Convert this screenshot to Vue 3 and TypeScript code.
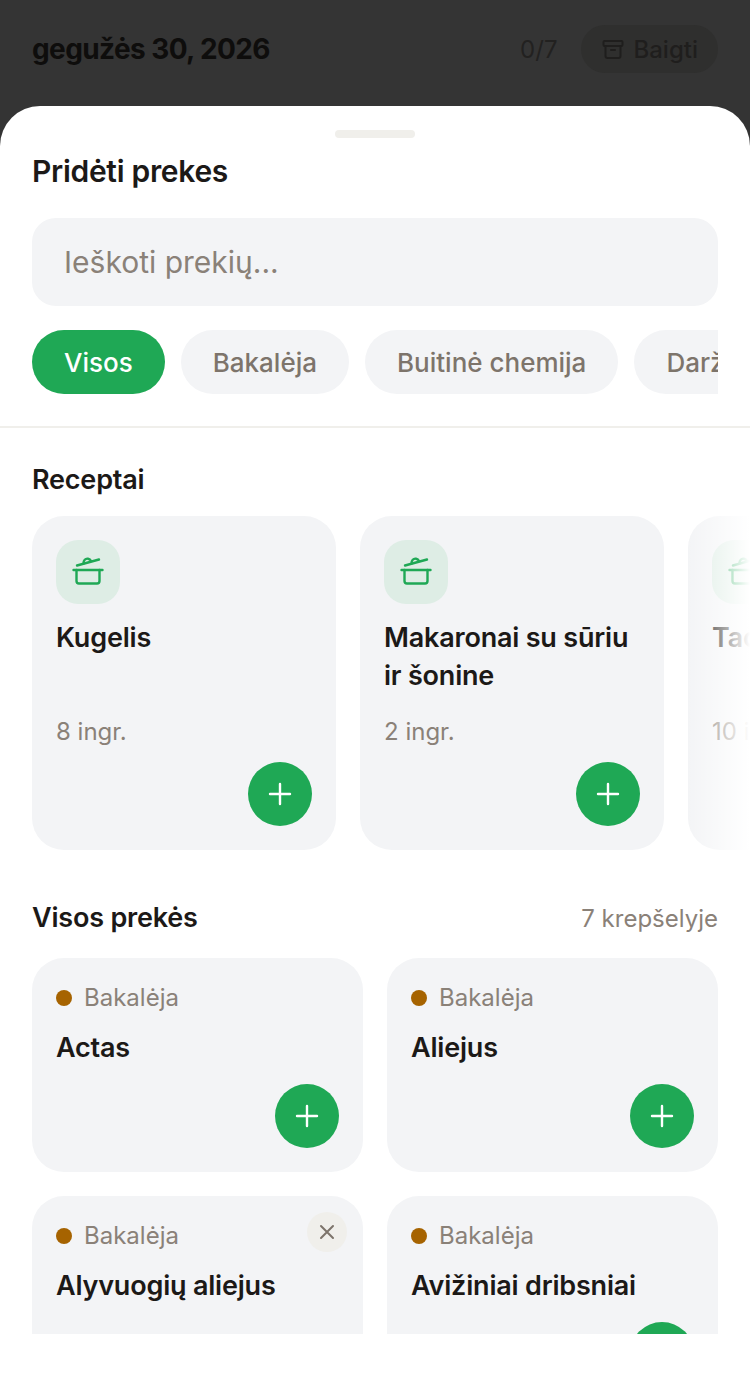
<script setup lang="ts">
interface Recipe { name: string; count: string }
interface Item { name: string; action: 'add' | 'qty' }
const chips: string[] = ['Visos', 'Bakalėja', 'Buitinė chemija', 'Daržovės']
const recipes: Recipe[] = [
  { name: 'Kugelis', count: '8 ingr.' },
  { name: 'Makaronai su sūriu ir šonine', count: '2 ingr.' },
  { name: 'Tacos', count: '10 ingr.' },
]
const items: Item[] = [
  { name: 'Actas', action: 'add' },
  { name: 'Aliejus', action: 'add' },
  { name: 'Alyvuogių aliejus', action: 'qty' },
  { name: 'Avižiniai dribsniai', action: 'add' },
]
</script>

<template>
  <div class="page">
    <header class="top">
      <div class="date">gegužės 30, 2026</div>
      <div class="top-right">
        <span class="progress">0/7</span>
        <span class="finish">
          <svg width="24" height="24" viewBox="0 0 24 24" fill="none" stroke="currentColor" stroke-width="2" stroke-linecap="round" stroke-linejoin="round">
            <rect x="2.5" y="4" width="19" height="5" rx="1" />
            <path d="M4.5 9v10a2 2 0 0 0 2 2h11a2 2 0 0 0 2-2V9" />
            <path d="M10 13h4" />
          </svg>
          Baigti
        </span>
      </div>
    </header>

    <section class="sheet">
      <div class="handle"></div>
      <div class="head">
        <h1 class="title">Pridėti prekes</h1>
        <div class="search">Ieškoti prekių...</div>
        <div class="chips">
          <span v-for="(c, i) in chips" :key="c" class="chip" :class="{ active: i === 0 }">{{ c }}</span>
        </div>
      </div>

      <div class="scroll">
        <h2 class="section-title recipes-title">Receptai</h2>
        <div class="recipes-wrap">
          <div class="recipes">
            <article v-for="r in recipes" :key="r.name" class="recipe">
              <div class="pot">
                <svg width="32" height="32" viewBox="0 0 32 32" fill="none" stroke="currentColor" stroke-width="2.4" stroke-linecap="round" stroke-linejoin="round">
                  <path d="M3 14h29" transform="translate(-1.5 0)" />
                  <path d="M4.5 14v11a2.5 2.5 0 0 0 2.5 2.5h18a2.5 2.5 0 0 0 2.5-2.5V14" />
                  <path d="M5 9.5 27 3.5" />
                  <path d="M11.5 7.5c-.2-3 2-5.300 4.500-4.800 1.400.3 2.500 1.200 3 2.300" />
                </svg>
              </div>
              <div class="recipe-name">{{ r.name }}</div>
              <div class="recipe-count">{{ r.count }}</div>
              <div class="recipe-foot">
                <button class="add" aria-label="Pridėti">
                  <svg width="28" height="28" viewBox="0 0 28 28" fill="none" stroke="#fff" stroke-width="2.4" stroke-linecap="round"><path d="M14 4v20M4 14h20" /></svg>
                </button>
              </div>
            </article>
          </div>
          <div class="fade"></div>
        </div>

        <div class="list-head">
          <h2 class="section-title">Visos prekės</h2>
          <span class="in-cart">7 krepšelyje</span>
        </div>

        <div class="grid">
          <article v-for="it in items" :key="it.name" class="item">
            <button v-if="it.action === 'qty'" class="close" aria-label="Pašalinti">
              <svg width="20" height="20" viewBox="0 0 20 20" fill="none" stroke="currentColor" stroke-width="2" stroke-linecap="round"><path d="M4 4l12 12M16 4L4 16" /></svg>
            </button>
            <div class="cat"><span class="dot"></span>Bakalėja</div>
            <div class="item-name">{{ it.name }}</div>
            <div class="item-foot">
              <div v-if="it.action === 'qty'" class="qty">
                <span class="qty-round"></span>
                <span class="qty-pill"></span>
                <span class="qty-round"></span>
              </div>
              <button v-else class="add" aria-label="Pridėti">
                <svg width="28" height="28" viewBox="0 0 28 28" fill="none" stroke="#fff" stroke-width="2.4" stroke-linecap="round"><path d="M14 4v20M4 14h20" /></svg>
              </button>
            </div>
          </article>
        </div>
      </div>
    </section>
  </div>
</template>

<style>
html, body { margin: 0; background: #fff; }
</style>

<style scoped>
.page {
  width: 750px;
  height: 1390px;
  display: flex;
  flex-direction: column;
  background: #343434;
  overflow: hidden;
  font-family: Inter, "Liberation Sans", sans-serif;
  color: #1c1917;
}
.top {
  height: 106px;
  box-sizing: border-box;
  padding: 0 32px 8px;
  display: flex;
  align-items: center;
  justify-content: space-between;
  flex: none;
}
.date { font-size: 28px; font-weight: 700; color: #0e0d0c; letter-spacing: -0.6px; }
.top-right { display: flex; align-items: center; gap: 24px; }
.progress { font-size: 24px; color: #222120; }
.finish {
  height: 48px;
  box-sizing: border-box;
  padding: 0 20px;
  border-radius: 24px;
  background: #2f2f2e;
  display: flex;
  align-items: center;
  gap: 8px;
  font-size: 24px;
  font-weight: 500;
  color: #1f1e1d;
}
.sheet {
  flex: 1;
  min-height: 0;
  background: #fff;
  border-radius: 40px 40px 0 0;
  display: flex;
  flex-direction: column;
  padding-bottom: 56px;
}
.handle {
  width: 80px;
  height: 8px;
  border-radius: 4px;
  background: #f0efeb;
  margin: 24px auto 0;
  flex: none;
}
.head {
  padding: 14px 32px 32px;
  border-bottom: 2px solid #f0efeb;
  flex: none;
}
.title { margin: 0; font-size: 30px; font-weight: 600; line-height: 38px; letter-spacing: -0.3px; }
.search {
  margin-top: 28px;
  height: 88px;
  box-sizing: border-box;
  padding: 0 32px;
  border-radius: 24px;
  background: #f3f4f6;
  display: flex;
  align-items: center;
  font-size: 30px;
  color: #8a8178;
}
.chips { margin-top: 24px; display: flex; gap: 16px; overflow: hidden; }
.chip {
  flex: none;
  height: 64px;
  box-sizing: border-box;
  padding: 0 32px;
  border-radius: 32px;
  background: #f3f4f6;
  color: #7d746b;
  display: flex;
  align-items: center;
  font-size: 26px;
  font-weight: 500;
}
.chip.active { background: #1fa855; color: #fff; }
.scroll { flex: 1; min-height: 0; overflow: hidden; }
.section-title { margin: 0; font-size: 27px; font-weight: 600; line-height: 36px; letter-spacing: -0.2px; }
.recipes-title { margin: 34px 32px 18px; }
.recipes-wrap { position: relative; }
.recipes { display: flex; gap: 24px; padding-left: 32px; overflow: hidden; }
.recipe {
  flex: none;
  width: 304px;
  height: 334px;
  box-sizing: border-box;
  padding: 24px;
  border-radius: 32px;
  background: #f3f4f6;
  display: flex;
  flex-direction: column;
}
.pot {
  width: 64px;
  height: 64px;
  border-radius: 22px;
  background: #deede5;
  color: #1fa855;
  display: flex;
  align-items: center;
  justify-content: center;
}
.recipe-name { margin-top: 15px; height: 76px; font-size: 27px; font-weight: 600; line-height: 38px; letter-spacing: -0.2px; }
.recipe-count { margin-top: 21px; font-size: 24px; line-height: 32px; color: #8a8178; }
.recipe-foot { margin-top: auto; display: flex; justify-content: flex-end; }
.fade {
  position: absolute;
  top: 0;
  right: 0;
  bottom: 0;
  width: 64px;
  background: linear-gradient(to right, rgba(255,255,255,0), #fff);
  pointer-events: none;
}
.add {
  width: 64px;
  height: 64px;
  padding: 0;
  border: 0;
  border-radius: 50%;
  background: #1fa855;
  display: flex;
  align-items: center;
  justify-content: center;
}
.list-head {
  margin: 50px 32px 22px;
  display: flex;
  align-items: center;
  justify-content: space-between;
}
.in-cart { font-size: 24px; color: #8a8178; }
.grid { padding: 0 32px; display: grid; grid-template-columns: 1fr 1fr; gap: 24px; }
.item {
  position: relative;
  height: 214px;
  box-sizing: border-box;
  padding: 24px;
  border-radius: 32px;
  background: #f3f4f6;
  display: flex;
  flex-direction: column;
}
.close {
  position: absolute;
  top: 16px;
  right: 16px;
  width: 40px;
  height: 40px;
  padding: 0;
  border: 0;
  border-radius: 50%;
  background: #f0efeb;
  color: #7d746b;
  display: flex;
  align-items: center;
  justify-content: center;
}
.cat { display: flex; align-items: center; gap: 12px; font-size: 24px; line-height: 32px; color: #8a8178; }
.dot { width: 16px; height: 16px; border-radius: 50%; background: #a66300; }
.item-name { margin-top: 16px; font-size: 27px; font-weight: 600; line-height: 36px; letter-spacing: -0.2px; }
.item-foot { margin-top: auto; display: flex; justify-content: flex-end; }
.qty { flex: 1; display: flex; justify-content: space-between; padding: 0 8px; margin-bottom: 8px; }
.qty-round { width: 44px; height: 44px; border-radius: 50%; background: #fff; }
.qty-pill { width: 92px; height: 44px; border-radius: 22px; background: #fff; }
</style>
